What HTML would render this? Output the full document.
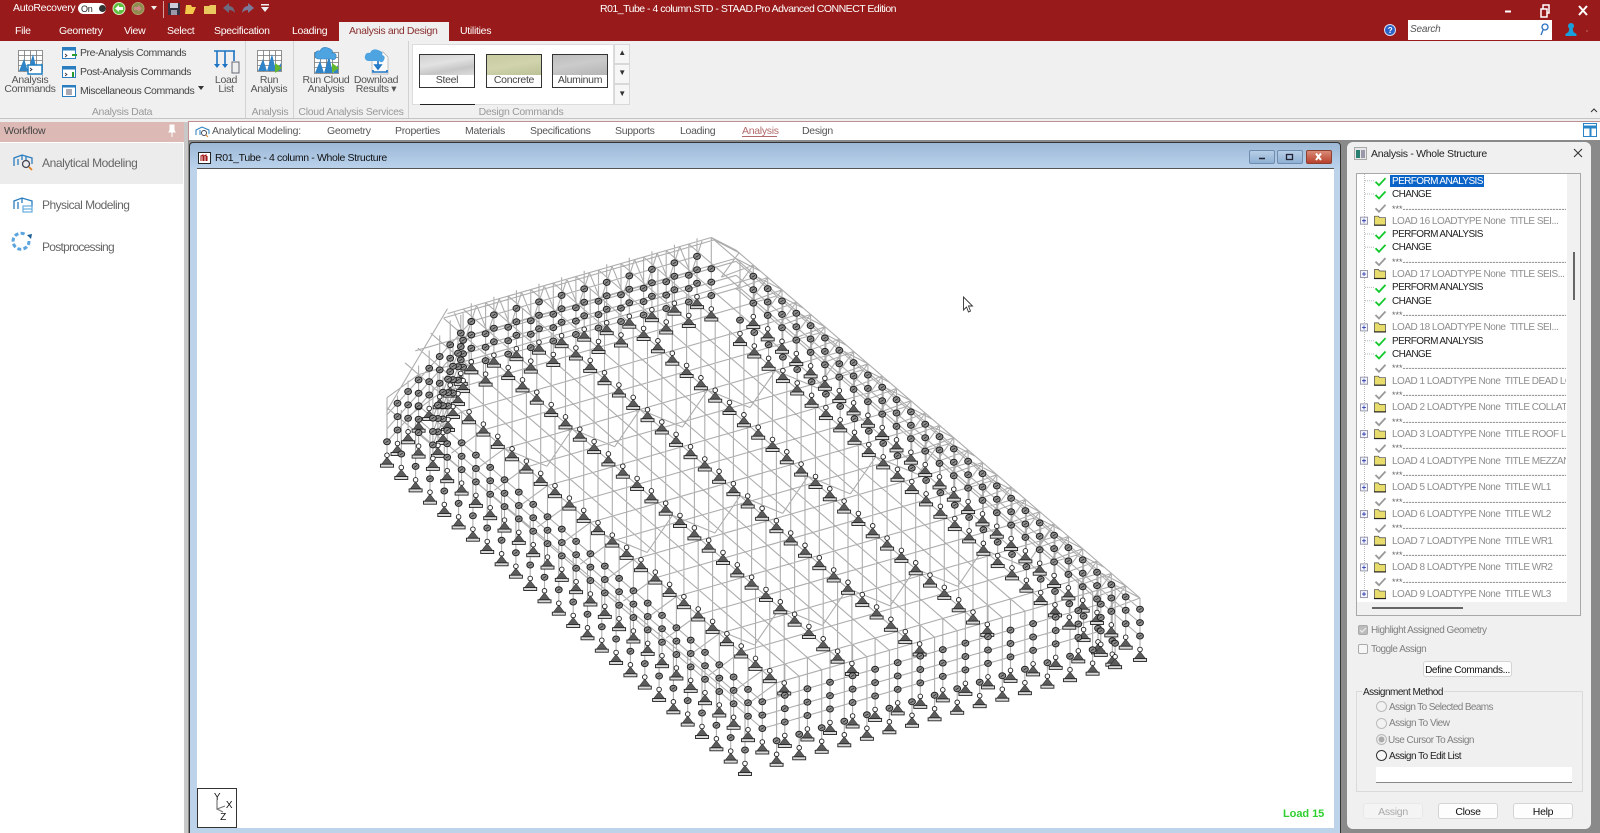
<!DOCTYPE html>
<html lang="en"><head><meta charset="utf-8"><title>R01_Tube - STAAD.Pro</title>
<style>
html,body{margin:0;padding:0;background:#8a8a8a}
body{position:relative;width:1600px;height:833px;overflow:hidden;font-family:"Liberation Sans",sans-serif;font-size:10.5px;letter-spacing:-.3px;color:#333}
.a{position:absolute}
.t{position:absolute;white-space:pre;line-height:12px;height:12px}
.c{text-align:center;transform:translateX(-50%)}
svg{position:absolute;overflow:visible}
.w{color:#fff}
.g{color:#999}
.tr{font-size:10px;letter-spacing:-.6px;color:#222}
.lo{font-size:10px;letter-spacing:-.5px;color:#8e8e8e}
.dt{font-size:9px;letter-spacing:0;color:#666;overflow:hidden;width:174px}
.th{position:absolute;top:54px;width:54px;height:32px;border:1px solid #333;background:#fff;text-align:center}
.th i{display:block;height:20px}
.th span{line-height:11px;display:block;font-size:10.5px;color:#444}
.sb{position:absolute;left:614px;width:14px;border:1px solid #d8d8d8;background:#f6f6f6;color:#333;font-size:8px;text-align:center}
.btn{position:absolute;background:#fdfdfd;border:1px solid #d4d4d4;border-radius:3px;text-align:center;line-height:16px;box-sizing:border-box;color:#111}
.rad{position:absolute;left:1376px;width:9px;height:9px;border:1px solid #bbb;border-radius:50%;background:#f2f2f2}
.lbl{font-size:10px;letter-spacing:-.5px;color:#808080}
</style></head><body>

<!-- red title -->
<div class="a" style="left:0;top:0;width:1600px;height:41px;background:#981a1a"></div>
<div class="t w" style="left:13px;top:2px">AutoRecovery</div>
<div class="a" style="left:78px;top:3px;width:28px;height:11px;background:#fff;border-radius:6px"></div>
<div class="a" style="left:99px;top:5px;width:7px;height:7px;background:#333;border-radius:50%"></div>
<div class="t" style="left:81px;top:3px;font-size:9px;color:#222">On</div>
<svg style="left:0;top:0" width="300" height="20">
<circle cx="119" cy="8.500" r="6" fill="#5fbf3f" stroke="#d9e8c0"/><path d="M115 8.500l4-3.500v2h4v3h-4v2z" fill="#fff"/>
<circle cx="138" cy="8.500" r="6" fill="#8d8c4c" stroke="#b0a070"/><path d="M142 8.500l-4-3.500v2h-4v3h4v2z" fill="#c88"/>
<path d="M151 6h6l-3 4z" fill="#eee"/>
<path d="M163.500 1v17" stroke="#d9a0a0"/>
<rect x="168" y="3" width="12" height="12" fill="#334"/><rect x="170" y="3" width="8" height="5" fill="#ccd"/><rect x="171" y="10" width="6" height="5" fill="#99a"/>
<path d="M186 5h5l1 2h4l-3 7h-8z" fill="#f4c84a"/>
<path d="M204 6h5l1-1h6v9h-12z" fill="#e9c860"/>
<path d="M223 8l6-5v3q5 0 6 7q-2-3-6-3v3z" fill="#6d6a80"/>
<path d="M254 8l-6-5v3q-5 0-6 7q2-3 6-3v3z" fill="#7c7a9a"/>
<path d="M261 4h8v1.500h-8zM261 7h8l-4 5z" fill="#eee"/>
</svg>
<div class="t w" style="left:600px;top:3px;letter-spacing:-.5px">R01_Tube - 4 column.STD - STAAD.Pro Advanced CONNECT Edition</div>
<svg style="left:1500px;top:0" width="100" height="20">
<path d="M5 11.500h6" stroke="#fff" stroke-width="2"/>
<path d="M41 9h6v8h-6zM43 9V5h6v8h-2" fill="none" stroke="#fff" stroke-width="1.500"/>
<path d="M79 6l8 9M87 6l-8 9" stroke="#fff" stroke-width="2"/>
</svg>
<!-- tabs -->
<div class="t w" style="left:15px;top:25px">File</div>
<div class="t w" style="left:59px;top:25px">Geometry</div>
<div class="t w" style="left:124px;top:25px">View</div>
<div class="t w" style="left:167px;top:25px">Select</div>
<div class="t w" style="left:214px;top:25px">Specification</div>
<div class="t w" style="left:292px;top:25px">Loading</div>
<div class="a" style="left:339px;top:22px;width:110px;height:19px;background:#f0f0f0"></div>
<div class="t" style="left:349px;top:25px;color:#8a3030;letter-spacing:-.35px">Analysis and Design</div>
<div class="t w" style="left:460px;top:25px">Utilities</div>
<svg style="left:1380px;top:22px" width="20" height="16"><circle cx="10" cy="8" r="5.500" fill="#2a62c8" stroke="#dde"/><text x="10" y="11" font-size="8" fill="#fff" text-anchor="middle" font-family="Liberation Sans" font-weight="bold">?</text></svg>
<div class="a" style="left:1408px;top:20px;width:144px;height:20px;background:#fff"></div>
<div class="t" style="left:1410px;top:24px;font-style:italic;color:#555;letter-spacing:-.2px;font-size:10px">Search</div>
<svg style="left:1536px;top:22px" width="60" height="18">
<circle cx="9" cy="5" r="3" fill="none" stroke="#2a6fc0" stroke-width="1.300"/><path d="M7 8l-2 5" stroke="#2a6fc0" stroke-width="1.300"/>
<circle cx="35" cy="4" r="3" fill="#18a0dc"/><path d="M33.500 6h3l1 4 3 2v2h-11v-2l3-2z" fill="#18a0dc"/>
<circle cx="51" cy="9" r="1" fill="#b05050"/>
</svg>

<!-- ribbon -->
<div class="a" style="left:0;top:41px;width:1600px;height:77px;background:#f0f0f0;border-bottom:1px solid #c4c4c4"></div>
<div class="a" style="left:245px;top:41px;width:1px;height:77px;background:#d2d2d2"></div>
<div class="a" style="left:293px;top:41px;width:1px;height:77px;background:#d2d2d2"></div>
<div class="a" style="left:408px;top:41px;width:1px;height:77px;background:#d2d2d2"></div>
<svg style="left:0;top:0;width:0;height:0"><defs>
<symbol id="gr" viewBox="0 0 25 22" width="25" height="22">
<path d="M.500 .500h24v21h-24zM.500 5.500h24M.500 10.500h24M.500 15.500h24M6.500 .500v21M12.500 .500v21M18.500 .500v21" fill="#fff" stroke="#777" stroke-width=".8"/>
<path d="M1 21L6 9l4 12 5-17 4 17 5-8v8z" fill="#2f84c8"/>
</symbol></defs></svg>
<svg style="left:18px;top:50px" width="27" height="26"><use href="#gr"/><rect x="10" y="15" width="14" height="9" fill="#fff" stroke="#1f7fc0" stroke-width="1.500"/><path d="M12 18l2 1.500-2 1.500" stroke="#223" fill="none" stroke-width=".8"/></svg>
<div class="t c" style="left:30px;top:74px;color:#555">Analysis</div>
<div class="t c" style="left:30px;top:83px;color:#555">Commands</div>
<svg style="left:62px;top:46px" width="15" height="54" fill="none">
<rect x=".5" y="1.500" width="13" height="11" fill="#fff" stroke="#2a7ebf"/><path d="M1 1.500h12v3H1z" fill="#2a7ebf"/><path d="M3 8l2 1.500-2 1.500" stroke="#334" stroke-width=".8"/><path d="M10 9h5" stroke="#2a9a30" stroke-width="2"/>
<rect x=".5" y="20.500" width="13" height="11" fill="#fff" stroke="#2a7ebf"/><path d="M1 20.500h12v3H1z" fill="#2a7ebf"/><path d="M3 27l2 1.500-2 1.500" stroke="#334" stroke-width=".8"/><path d="M11 26v5" stroke="#2a9a30" stroke-width="2"/>
<rect x=".5" y="39.500" width="13" height="11" fill="#fff" stroke="#2a7ebf"/><path d="M1 39.500h12v2H1z" fill="#2a7ebf"/><path d="M4 44h6M4 46h6M4 48h6" stroke="#556"/>
</svg>
<div class="t" style="left:80px;top:47px;color:#444;letter-spacing:-.45px">Pre-Analysis Commands</div>
<div class="t" style="left:80px;top:65.500px;color:#444;letter-spacing:-.42px">Post-Analysis Commands</div>
<div class="t" style="left:80px;top:84.500px;color:#444;letter-spacing:-.4px">Miscellaneous Commands</div>
<svg style="left:197px;top:85px" width="8" height="6"><path d="M1 1h6l-3 4z" fill="#333"/></svg>
<svg style="left:213px;top:49px" width="28" height="26" fill="none" stroke="#1c74c4" stroke-width="1.600">
<path d="M1 2h21M4 2v16M12 2v16M21 2v10"/><path d="M1 15l3 4 3-4zM9 15l3 4 3-4z" fill="#1c74c4" stroke="none"/><rect x="19" y="13" width="7" height="11" fill="#eee" stroke="#667" stroke-width="1"/>
</svg>
<div class="t c" style="left:226px;top:74px;color:#555">Load</div>
<div class="t c" style="left:226px;top:83px;color:#555">List</div>
<svg style="left:257px;top:50px" width="26" height="24"><use href="#gr"/><path d="M18 13l7 5-7 5z" fill="#65b82e"/></svg>
<div class="t c" style="left:269px;top:74px;color:#555">Run</div>
<div class="t c" style="left:269px;top:83px;color:#555">Analysis</div>
<svg style="left:313px;top:46px" width="29" height="29"><g transform="translate(1 6)"><use href="#gr"/></g><path d="M5 13q-4-1-3-5t5-3q2-5 8-3t4 5q5 0 4 4t-5 2z" fill="#4ea4e0" stroke="#2d7fc0" stroke-width=".6"/><path d="M19 17l7 5-7 5z" fill="#65b82e"/></svg>
<div class="t c" style="left:326px;top:74px;color:#555">Run Cloud</div>
<div class="t c" style="left:326px;top:83px;color:#555">Analysis</div>
<svg style="left:363px;top:46px" width="28" height="29"><path d="M9 6h11l5 5v17H9z" fill="#fafafa" stroke="#aaa" stroke-width=".7"/><path d="M5 15q-4-1-3-5t5-3q2-5 8-3t4 5q4 1 2 5t-5 1z" fill="#4ea4e0"/><path d="M15 15v7M12 19l3 4 3-4zM10 24v2h14v-2" fill="none" stroke="#1c74c4" stroke-width="1.600"/></svg>
<div class="t c" style="left:376px;top:74px;color:#555">Download</div>
<div class="t c" style="left:376px;top:83px;color:#555">Results ▾</div>
<!-- gallery -->
<div class="a" style="left:412px;top:44px;width:202px;height:61px;background:#fff;border:1px solid #dcdcdc;box-sizing:border-box"></div>
<div class="th" style="left:419px"><i style="background:linear-gradient(170deg,#d0d0d0,#e2e2e2 40%,#c6c6c6 70%,#dcdcdc)"></i><span>Steel</span></div>
<div class="th" style="left:486px"><i style="background:linear-gradient(170deg,#c8cca0,#d0d3ac 50%,#bcc196)"></i><span>Concrete</span></div>
<div class="th" style="left:552px"><i style="background:linear-gradient(170deg,#bdbdbd,#cbcbcb 45%,#b4b4b4)"></i><span>Aluminum</span></div>
<div class="a" style="left:420px;top:104px;width:55px;height:1px;background:#222"></div>
<div class="sb" style="top:44px;height:18px;line-height:16px">▲</div>
<div class="sb" style="top:64px;height:18px;line-height:16px">▼</div>
<div class="sb" style="top:84px;height:19px;line-height:17px">▼</div>
<div class="t c g" style="left:122px;top:106px">Analysis Data</div>
<div class="t c g" style="left:270px;top:106px">Analysis</div>
<div class="t c g" style="left:351px;top:106px">Cloud Analysis Services</div>
<div class="t c g" style="left:521px;top:106px">Design Commands</div>
<svg style="left:1589px;top:107px" width="10" height="8"><path d="M2 5l3-3 3 3" fill="none" stroke="#333"/></svg>

<!-- left workflow -->
<div class="a" style="left:0;top:119px;width:1600px;height:3px;background:#eee"></div>
<div class="a" style="left:0;top:122px;width:184px;height:711px;background:#fff;border-right:1px solid #aaa"></div>
<div class="a" style="left:0;top:122px;width:184px;height:20px;background:#dcb9b5"></div>
<div class="t" style="left:4px;top:125px;color:#444;letter-spacing:-.2px">Workflow</div>
<svg style="left:167px;top:124px" width="10" height="14"><path d="M3 1h4v5l1 2H2l1-2zM5 8v5" fill="#fff" stroke="#fff"/></svg>
<div class="a" style="left:0;top:143px;width:183px;height:41px;background:#ececec"></div>
<svg style="left:12px;top:151px" width="24" height="100" fill="none" stroke="#2a7ebf" stroke-width="1.300">
<path d="M2 15V7l8-3 10 3v6M6 8v6M10 4v5M14 5v4"/><circle cx="14" cy="13" r="3.500" stroke="#445"/><path d="M17 16l3 3" stroke="#e08020" stroke-width="1.800"/>
<path d="M2 58V50l8-3 10 3v6M6 51v7M10 47v5"/><path d="M11 55h9v6h-9zM11 58h9" stroke="#6bb0e0"/>
<g stroke-width="3" stroke="#3f94d8" stroke-dasharray="4 2.200" opacity=".85"><path d="M17 90a8 8 0 1 1-3-6"/></g><path d="M15 84l5-1-1 5z" fill="#1a5e98" stroke="none"/>
</svg>
<div class="t" style="left:42px;top:157px;font-size:12px;letter-spacing:-.42px;color:#666">Analytical Modeling</div>
<div class="t" style="left:42px;top:199px;font-size:12px;letter-spacing:-.55px;color:#666">Physical Modeling</div>
<div class="t" style="left:42px;top:241px;font-size:12px;letter-spacing:-.72px;color:#666">Postprocessing</div>

<!-- toolbar -->
<div class="a" style="left:184px;top:122px;width:4px;height:711px;background:#c8c8c8"></div>
<div class="a" style="left:188px;top:121px;width:1412px;height:19px;background:#fff;border-top:1px solid #c09090;border-left:1px solid #c09090;box-sizing:border-box"></div>
<svg style="left:195px;top:124px" width="16" height="14" fill="none" stroke="#2a7ebf"><path d="M1 11V6l6-3 7 3v4M5 6v5"/><circle cx="9" cy="9" r="2.500" stroke="#445"/><path d="M11 11l2 2" stroke="#e08020"/></svg>
<div class="t" style="left:212px;top:124.500px;color:#555;letter-spacing:-.22px">Analytical Modeling:</div>
<div class="t" style="left:327px;top:124.500px;color:#555">Geometry</div>
<div class="t" style="left:395px;top:124.500px;color:#555">Properties</div>
<div class="t" style="left:465px;top:124.500px;color:#555">Materials</div>
<div class="t" style="left:530px;top:124.500px;color:#555">Specifications</div>
<div class="t" style="left:615px;top:124.500px;color:#555">Supports</div>
<div class="t" style="left:680px;top:124.500px;color:#555">Loading</div>
<div class="t" style="left:742px;top:124.500px;color:#b06a6a">Analysis</div>
<div class="a" style="left:742px;top:136px;width:35px;height:1px;background:#b06a6a"></div>
<div class="t" style="left:802px;top:124.500px;color:#555">Design</div>
<svg style="left:1583px;top:123px" width="14" height="14"><rect x=".5" y=".5" width="13" height="13" fill="#fff" stroke="#2a84c8"/><path d="M.5 4h13" stroke="#2a84c8" stroke-width="3"/><path d="M7.500 4v9" stroke="#2a84c8" stroke-width="2"/></svg>

<!-- MDI -->
<div class="a" style="left:188px;top:140px;width:1412px;height:693px;background:#8a8a8a"></div>
<div class="a" style="left:189px;top:142px;width:1152px;height:691px;background:linear-gradient(#9cb8d6,#b4cde8 20px,#bcd3ea 28px);border:1px solid #333;border-bottom:0;border-radius:4px 4px 0 0;box-sizing:border-box"></div>
<div class="a" style="left:197px;top:168px;width:1137px;height:660px;background:#fff;border-top:1px solid #555;box-sizing:border-box"></div>
<svg style="left:198px;top:152px" width="13" height="12"><rect x=".5" y=".5" width="12" height="11" fill="#fff" stroke="#222"/><path d="M3 9V4l2-1v6M6 9V4l2-1v6M9 9V4" fill="none" stroke="#a01818" stroke-width="1.100"/></svg>
<div class="t" style="left:215px;top:152px;color:#111;letter-spacing:-.36px;font-size:10.500px">R01_Tube - 4 column - Whole Structure</div>
<div class="a" style="left:1249px;top:150px;width:26px;height:14px;background:linear-gradient(#b8cee6,#8fb0d4);border:1px solid #6f8db0;border-radius:2px;box-sizing:border-box"></div>
<div class="a" style="left:1277px;top:150px;width:26px;height:14px;background:linear-gradient(#b8cee6,#8fb0d4);border:1px solid #6f8db0;border-radius:2px;box-sizing:border-box"></div>
<div class="a" style="left:1306px;top:150px;width:26px;height:14px;background:linear-gradient(#d98a78,#b8402c);border:1px solid #8c4030;border-radius:2px;box-sizing:border-box"></div>
<svg style="left:1249px;top:150px" width="84" height="14"><path d="M10 8.500h6" stroke="#223" stroke-width="1.500"/><rect x="37.500" y="4.500" width="6" height="5" fill="none" stroke="#223" stroke-width="1.300"/><path d="M67 3.500l5 6.500M72 3.500l-5 6.500" stroke="#fff" stroke-width="2"/></svg>

<!-- model -->
<svg id="m" style="left:0;top:0" width="1600" height="833"></svg>
<script>
(function(){
var P=function(i,j,h){return [387+14.32*i+22.57*j,461.7+12.33*i-6.51*j-(h||0)]};
var f=function(n){return Math.round(n*10)/10};
var hr=function(j){return j<1.4?64+14*j/1.4:(j>16.4?78-20*(j-16.4)/1.1:78)};
var is=function(j){return Math.max(-3.2,-0.68*j)};
var js=function(i){return i<0?-i/0.68:0};
var d='',o='';
var L=function(a,b){d+='M'+f(a[0])+' '+f(a[1])+'L'+f(b[0])+' '+f(b[1])};
var E=17.5;
var J=[0,1.4];for(var k=1;k<=15;k++)J.push(1.4+k);J.push(E);
J.forEach(function(j){var s=is(j);L(P(s,j,j==0?54:hr(j)),P(25,j,hr(j)))});
var I=[-3.2,-3];for(k=-1.5;k<=25;k+=1.5)I.push(k);I.push(25);
I.forEach(function(i){var s=js(i);var pts=[s];[1.4,16.4,E].forEach(function(q){if(q>s)pts.push(q)});
 for(var n=0;n<pts.length-1;n++)L(P(i,pts[n],hr(pts[n])),P(i,pts[n+1],hr(pts[n+1])))});
L(P(0,0,51),P(-3.5,4.9,78));
/* chords along perimeter rows */
[20,33,47].forEach(function(h){
 L(P(0,1.4,h),P(24,1.4,h));L(P(-3.2,E,h),P(25,E,h));
 L(P(24,1.4,h),P(24,16.4,h));L(P(-4.2,6.4,h),P(-4.2,16.4,h));L(P(-3.2,5.4,h),P(-3.2,E,h));
 L(P(0,0,h),P(-4.2,6.4,h));L(P(1,1.4,h),P(-3.2,5.4,h));
});
/* trusses along back edge and right edge */
for(k=5;k<16;k++){L(P(-3.2,k,78),P(-3.2,k+.5,47));L(P(-3.2,k+.5,47),P(-3.2,k+1,78))}
for(k=-3;k<25;k++){L(P(k,E,58),P(k+.5,16.4,47));L(P(k+.5,16.4,47),P(k+1,E,58))}
/* transverse zig-zag bands */
[6,13,20.5].forEach(function(i){for(var q=1.4;q<16;q+=3){L(P(i,q,78),P(i+.6,q+1.5,58));L(P(i+.6,q+1.5,58),P(i,q+3,78))}});
var S=[];var add=function(i,j,n){S.push([i,j,n])};
for(k=0;k<=25;k++)add(k,0,1);
for(k=0;k<=24;k++)add(k,1.4,3);
for(k=0;k<=15;k++)add(25,1.4+k,1);add(25,E,3);
for(k=1;k<=15;k++)add(24,1.4+k,3);
for(k=-2;k<=24;k++){add(k+.8,16.4,1);add(k,E,3)}
for(k=0;k<=10;k++)add(-4.2,6.4+k,3);
for(k=0;k<=11;k++)add(-3.2,5.4+k,3);
for(k=1;k<=8;k++)add(-4.2*k/8,6.4*k/8,3);
for(k=1;k<=5;k++)add(1-4.2*k/6,1.4+4*k/6,3);
[4.4,7.4,10.4,13.4].forEach(function(j){for(var i=(j==4.4?-1.2:-2.2);i<=20.9;i+=1)add(i,j,0)});
S.forEach(function(s){var g=P(s[0],s[1]);
 var h=s[0]<-3.5?65:(s[1]>=E?58:(s[0]<0&&s[1]<5.5?51+27*s[1]/6.4:hr(s[1])));
 L(g,P(s[0],s[1],h))});
o+='<path d="'+d+'" fill="none" stroke="#adadad" stroke-width="1.100"/>';
S.sort(function(a,b){return P(a[0],a[1])[1]-P(b[0],b[1])[1]});
S.forEach(function(s){var g=P(s[0],s[1]),x=f(g[0]),y=f(g[1]);
 for(var n=0;n<s[2];n++){var yy=f(y-20-13.4*n);o+='<ellipse cx="'+x+'" cy="'+yy+'" rx="3.4" ry="3" fill="#8c8c8c" stroke="#222" stroke-width="1"/><path d="M'+(x-1.5)+' '+(yy+1)+'l3-2" stroke="#222" stroke-width=".7"/>'}
 o+='<circle cx="'+x+'" cy="'+f(y-6.5)+'" r="2.300" fill="#fff" stroke="#222" stroke-width=".9"/><path d="M'+x+' '+f(y-4.5)+'l5.800 7.500h-11.600z" fill="#5c5c5c" stroke="#333" stroke-width=".6"/><rect x="'+f(x-6.5)+'" y="'+f(y+2.5)+'" width="13" height="3" fill="#d8d8d8" stroke="#222" stroke-width=".9"/>';
});
document.getElementById('m').innerHTML=o;
})();
</script>
<!-- axis -->
<div class="a" style="left:197px;top:788px;width:40px;height:40px;border:1px solid #333;box-sizing:border-box;background:#fff"></div>
<svg style="left:197px;top:788px" width="40" height="40"><path d="M20 12v9l8-3M20 21l6 3" fill="none" stroke="#777" stroke-width="1.200"/>
<text x="20" y="12" font-size="10" fill="#111" text-anchor="middle" font-family="Liberation Sans">Y</text><text x="32" y="20" font-size="10" fill="#111" text-anchor="middle" font-family="Liberation Sans">X</text><text x="26" y="32" font-size="10" fill="#111" text-anchor="middle" font-family="Liberation Sans">Z</text></svg>
<div class="t" style="left:1283px;top:808px;color:#2fd02f;font-weight:bold;font-size:11px;letter-spacing:-.05px">Load 15</div>
<svg style="left:962px;top:296px" width="14" height="18"><path d="M1.500 1v13l3-3 2 5 2-1-2-5h4z" fill="#fff" stroke="#333" stroke-width=".9"/></svg>

<!-- right panel -->
<div class="a" style="left:1347px;top:142px;width:244px;height:687px;background:#f0f0f0;border-radius:6px"></div>
<svg style="left:1354px;top:147px" width="13" height="13"><rect x=".5" y=".5" width="12" height="12" fill="#e8e8e8" stroke="#aaa"/><rect x="2" y="3" width="4" height="8" fill="#2a8070"/><rect x="7" y="3" width="4" height="8" fill="#99a"/></svg>
<div class="t" style="left:1371px;top:148px;font-size:10.500px;letter-spacing:-.3px;color:#222">Analysis - Whole Structure</div>
<svg style="left:1573px;top:148px" width="10" height="10"><path d="M1 1l8 8M9 1l-8 8" stroke="#333" stroke-width="1.100"/></svg>
<div class="a" style="left:1356px;top:173px;width:225px;height:443px;background:#f1f1f1;border:1px solid #a8a8a8;box-sizing:border-box"></div>
<div class="a" style="left:1357px;top:174px;width:210px;height:428px;background:#fff;overflow:hidden"></div>
<div class="a" style="left:1573px;top:252px;width:1.500px;height:48px;background:#666"></div>
<div class="a" style="left:1372px;top:607px;width:91px;height:1.500px;background:#666"></div>
<svg id="tr" style="left:0;top:0" width="1600" height="833"></svg>
<script>
(function(){
var o='';var ck=function(y,c){o+='<path d="M1375.500 '+(y+1)+'l3.500 3.500 6.500-7" fill="none" stroke="'+c+'" stroke-width="1.800"/>'};
var fd=function(y){o+='<rect x="1360.500" y="'+(y-3.5)+'" width="7" height="7" fill="#f4f4ff" stroke="#99a"/><path d="M1362 '+y+'h4M1364 '+(y-2)+'v4" stroke="#2030a0" stroke-width=".8"/><path d="M1374.500 '+(y-4.5)+'h4l1 1.500h6v7.500h-11z" fill="#e8dc6c" stroke="#444" stroke-width=".7"/><path d="M1374 '+(y+4.5)+'h12" stroke="#222" stroke-width="1.200"/>'};
o+='<path d="M1364.500 174V598" stroke="#bbb" stroke-dasharray="1 1" fill="none"/>';
[180.7,194,234,247.3,287.4,300.7,340.7,354].forEach(function(v){ck(v,'#12c82a');o+='<path d="M1365 '+v+'h9" stroke="#bbb" stroke-dasharray="1 1"/>'});
for(var v=207.3,k=0;k<4;k++,v+=53.33){ck(v,'#999')}
for(k=0;k<8;k++){ck(394+26.67*k,'#999')}
[220.7,274,327.4].forEach(fd);
for(k=0;k<9;k++){fd(380.7+26.67*k)}
document.getElementById('tr').innerHTML=o;
})();
</script>
<div class="a" style="left:1390px;top:175px;width:94px;height:12px;background:#0a64c8"></div>
<div class="a" style="left:0;top:1px;width:1600px;height:0">
<div class="t tr" style="left:1392px;top:175px;color:#fff">PERFORM ANALYSIS</div>
<div class="t tr" style="left:1392px;top:188px">CHANGE</div>
<div class="t dt" style="left:1392px;top:202px">***-----------------------------------------------------------------------------------------------</div>
<div class="t lo" style="left:1392px;top:215px">LOAD 16 LOADTYPE None  TITLE SEI...</div>
<div class="t tr" style="left:1392px;top:228px">PERFORM ANALYSIS</div>
<div class="t tr" style="left:1392px;top:241px">CHANGE</div>
<div class="t dt" style="left:1392px;top:255px">***-----------------------------------------------------------------------------------------------</div>
<div class="t lo" style="left:1392px;top:268px">LOAD 17 LOADTYPE None  TITLE SEIS...</div>
<div class="t tr" style="left:1392px;top:281px">PERFORM ANALYSIS</div>
<div class="t tr" style="left:1392px;top:295px">CHANGE</div>
<div class="t dt" style="left:1392px;top:308px">***-----------------------------------------------------------------------------------------------</div>
<div class="t lo" style="left:1392px;top:321px">LOAD 18 LOADTYPE None  TITLE SEI...</div>
<div class="t tr" style="left:1392px;top:335px">PERFORM ANALYSIS</div>
<div class="t tr" style="left:1392px;top:348px">CHANGE</div>
<div class="t dt" style="left:1392px;top:361px">***-----------------------------------------------------------------------------------------------</div>
<div class="t lo" style="left:1392px;top:375px;width:174px;overflow:hidden">LOAD 1 LOADTYPE None  TITLE DEAD LOAD</div>
<div class="t dt" style="left:1392px;top:388px">***-----------------------------------------------------------------------------------------------</div>
<div class="t lo" style="left:1392px;top:401px;width:174px;overflow:hidden">LOAD 2 LOADTYPE None  TITLE COLLATERAL</div>
<div class="t dt" style="left:1392px;top:415px">***-----------------------------------------------------------------------------------------------</div>
<div class="t lo" style="left:1392px;top:428px;width:174px;overflow:hidden">LOAD 3 LOADTYPE None  TITLE ROOF LIVE</div>
<div class="t dt" style="left:1392px;top:441px">***-----------------------------------------------------------------------------------------------</div>
<div class="t lo" style="left:1392px;top:455px;width:174px;overflow:hidden">LOAD 4 LOADTYPE None  TITLE MEZZANINE</div>
<div class="t dt" style="left:1392px;top:468px">***-----------------------------------------------------------------------------------------------</div>
<div class="t lo" style="left:1392px;top:481px">LOAD 5 LOADTYPE None  TITLE WL1</div>
<div class="t dt" style="left:1392px;top:495px">***-----------------------------------------------------------------------------------------------</div>
<div class="t lo" style="left:1392px;top:508px">LOAD 6 LOADTYPE None  TITLE WL2</div>
<div class="t dt" style="left:1392px;top:521px">***-----------------------------------------------------------------------------------------------</div>
<div class="t lo" style="left:1392px;top:535px">LOAD 7 LOADTYPE None  TITLE WR1</div>
<div class="t dt" style="left:1392px;top:548px">***-----------------------------------------------------------------------------------------------</div>
<div class="t lo" style="left:1392px;top:561px">LOAD 8 LOADTYPE None  TITLE WR2</div>
<div class="t dt" style="left:1392px;top:575px">***-----------------------------------------------------------------------------------------------</div>
<div class="t lo" style="left:1392px;top:588px">LOAD 9 LOADTYPE None  TITLE WL3</div>
</div>

<div class="a" style="left:1358px;top:625px;width:10px;height:10px;background:#bcbcbc;border:1px solid #aaa;border-radius:2px;box-sizing:border-box"></div>
<svg style="left:1358px;top:625px" width="10" height="10"><path d="M2 5l2 2 4-4" fill="none" stroke="#eee" stroke-width="1.200"/></svg>
<div class="t lbl" style="left:1371px;top:624.500px">Highlight Assigned Geometry</div>
<div class="a" style="left:1358px;top:644px;width:10px;height:10px;background:#f6f6f6;border:1px solid #aaa;border-radius:2px;box-sizing:border-box"></div>
<div class="t lbl" style="left:1371px;top:643.500px">Toggle Assign</div>
<div class="btn" style="left:1423px;top:661px;width:89px;height:16px;letter-spacing:-.35px;font-size:10px;line-height:17px">Define Commands...</div>
<div class="a" style="left:1356px;top:691px;width:227px;height:101px;border:1px solid #dadada;box-sizing:border-box"></div>
<div class="t" style="left:1362px;top:686.500px;background:#f0f0f0;padding:0 1px;color:#222;font-size:10px;letter-spacing:-.5px">Assignment Method</div>
<div class="rad" style="top:701px"></div>
<div class="rad" style="top:718px"></div>
<div class="rad" style="top:734px;background:#aaa;box-shadow:inset 0 0 0 1.500px #f0f0f0"></div>
<div class="rad" style="top:750px;border-color:#333;background:#f8f8f8"></div>
<div class="t lbl" style="left:1389px;top:701.500px;letter-spacing:-.62px">Assign To Selected Beams</div>
<div class="t lbl" style="left:1389px;top:718px">Assign To View</div>
<div class="t lbl" style="left:1388px;top:734.500px">Use Cursor To Assign</div>
<div class="t lbl" style="left:1389px;top:751px;color:#222">Assign To Edit List</div>
<div class="a" style="left:1376px;top:767px;width:196px;height:16px;background:#fff;border-bottom:1px solid #888;box-sizing:border-box"></div>
<div class="btn" style="left:1363px;top:803px;width:60px;height:16px;background:#f4f4f4;border-color:#e8e8e8;color:#aaa">Assign</div>
<div class="btn" style="left:1438px;top:803px;width:60px;height:16px">Close</div>
<div class="btn" style="left:1513px;top:803px;width:60px;height:16px">Help</div>
</body></html>
